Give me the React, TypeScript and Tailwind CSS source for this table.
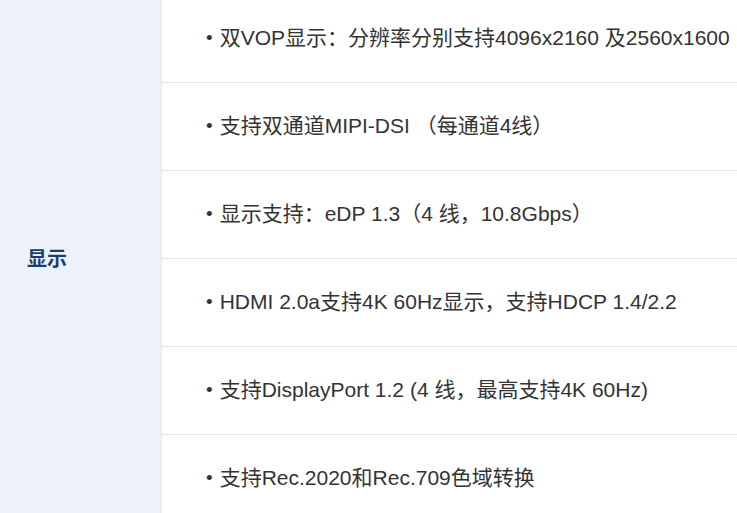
import React from "react";

const items = [
  "双VOP显示：分辨率分别支持4096x2160 及2560x1600",
  "支持双通道MIPI-DSI （每通道4线）",
  "显示支持：eDP 1.3（4 线，10.8Gbps）",
  "HDMI 2.0a支持4K 60Hz显示，支持HDCP 1.4/2.2",
  "支持DisplayPort 1.2 (4 线，最高支持4K 60Hz)",
  "支持Rec.2020和Rec.709色域转换",
];

export default function App() {
  return (
    <div
      className="h-[513px] w-[737px] overflow-hidden bg-white"
      style={{ fontFamily: '"Liberation Sans", Arial, "Noto Sans CJK SC", sans-serif' }}
    >
      <div className="-mt-[5px] flex">
        <div className="flex w-[162px] shrink-0 items-center border-r border-[#e3e6ea] bg-[#edf2fa] pl-[27px]">
          <span className="text-[20px] font-bold text-[#1d3c6e]">显示</span>
        </div>
        <div className="flex flex-1 flex-col">
          {items.map((t, i) => (
            <div
              key={i}
              className="flex h-[88px] items-center whitespace-nowrap border-b border-[#e5e5e5] pl-[44px] pb-[1px] text-[21px] text-[#333333]"
            >
              <span className="mr-[7px] text-[19px]">•</span>
              <span>{t}</span>
            </div>
          ))}
        </div>
      </div>
    </div>
  );
}
